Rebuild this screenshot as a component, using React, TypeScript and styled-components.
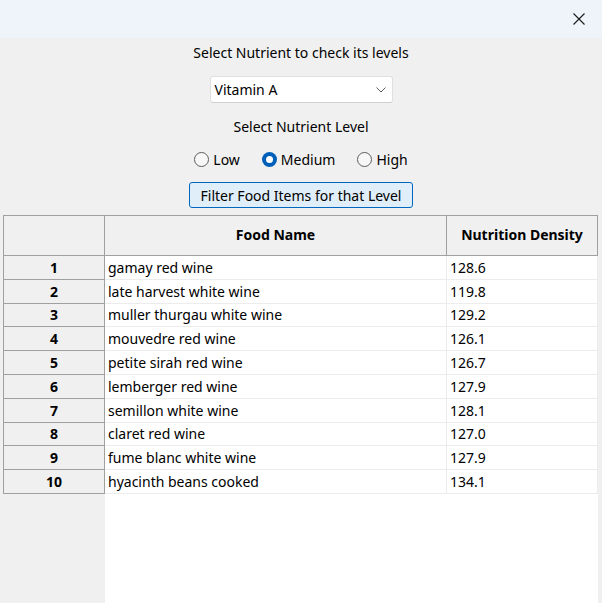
import React from "react";
import styled, { createGlobalStyle } from "styled-components";

const Global = createGlobalStyle`
  html, body { margin: 0; padding: 0; background: #f0f0f0; }
  body { font-family: "Noto Sans", "Open Sans", sans-serif; color: #000; }
`;

const Window = styled.div`
  width: 602px;
  height: 603px;
  display: flex;
  flex-direction: column;
  background: #f0f0f0;
  overflow: hidden;
`;

const TitleBar = styled.div`
  height: 38px;
  flex: none;
  display: flex;
  justify-content: flex-end;
  align-items: center;
  background: #eef4f9;
`;

const CloseButton = styled.div`
  width: 46px;
  height: 38px;
  display: flex;
  align-items: center;
  justify-content: center;
`;

const Controls = styled.div`
  display: flex;
  flex-direction: column;
  align-items: center;
  padding-top: 5px;
  height: 177px;
  box-sizing: border-box;
  flex: none;
`;

const Label = styled.div`
  font-size: 14px;
  line-height: 20px;
  height: 20px;
`;

const Combo = styled.div`
  margin-top: 13px;
  width: 183px;
  height: 27px;
  box-sizing: border-box;
  background: #fff;
  border: 1px solid #e0e0e0;
  border-bottom-color: #cfcfcf;
  border-radius: 3px;
  display: flex;
  align-items: center;
  justify-content: space-between;
  padding: 0 5px 0 4px;
  font-size: 14px;
`;

const LevelLabel = styled(Label)`
  margin-top: 14px;
`;

const RadioRow = styled.div`
  margin-top: 12px;
  display: flex;
  gap: 22px;
  font-size: 14px;
  height: 20px;
  align-items: center;
`;

const Radio = styled.div`
  display: flex;
  align-items: center;
  gap: 4px;
`;

const RadioCircle = styled.span<{ $checked?: boolean }>`
  width: 15px;
  height: 15px;
  box-sizing: border-box;
  border-radius: 50%;
  display: inline-flex;
  align-items: center;
  justify-content: center;
  border: ${(p) => (p.$checked ? "none" : "1px solid #5d5d5d")};
  background: ${(p) => (p.$checked ? "#005fb8" : "#f7f7f7")};
  &::after {
    content: "";
    display: ${(p) => (p.$checked ? "block" : "none")};
    width: 7px;
    height: 7px;
    border-radius: 50%;
    background: #fff;
  }
`;

const FilterButton = styled.div`
  margin-top: 13px;
  width: 224px;
  height: 26px;
  box-sizing: border-box;
  border: 1px solid #0067c0;
  border-radius: 3px;
  background: #e0eef9;
  display: flex;
  align-items: center;
  justify-content: center;
  font-size: 14px;
`;

const TableView = styled.div`
  flex: 1;
  display: flex;
  margin: 0 4px 0 3px;
  border-top: 1px solid #a0a0a0;
  min-height: 0;
`;

const RowHeaderColumn = styled.div`
  width: 102px;
  flex: none;
  display: flex;
  flex-direction: column;
  background: #f0f0f0;
`;

const DataColumn = styled.div`
  flex: 1;
  display: flex;
  flex-direction: column;
  background: #fff;
`;

const HeaderCell = styled.div<{ $w?: string }>`
  height: 40px;
  box-sizing: border-box;
  flex: ${(p) => (p.$w ? "none" : "1")};
  width: ${(p) => p.$w || "auto"};
  background: #f0f0f0;
  border-right: 1px solid #a0a0a0;
  border-bottom: 1px solid #a0a0a0;
  display: flex;
  align-items: center;
  justify-content: center;
  font-weight: bold;
  font-size: 14px;
  padding-bottom: 2px;
`;

const Corner = styled(HeaderCell)`
  flex: none;
  border-left: 1px solid #a0a0a0;
`;

const HeaderRow = styled.div`
  display: flex;
  height: 40px;
  flex: none;
`;

const NumCell = styled.div`
  height: 23.8px;
  flex: none;
  box-sizing: border-box;
  border-left: 1px solid #a0a0a0;
  border-right: 1px solid #a0a0a0;
  border-bottom: 1px solid #a0a0a0;
  display: flex;
  align-items: center;
  justify-content: center;
  font-weight: bold;
  font-size: 14px;
`;

const DataRow = styled.div`
  display: flex;
  flex: none;
  height: 23.8px;
  box-sizing: border-box;
  border-bottom: 1px solid #ececec;
`;

const DataCell = styled.div<{ $w?: string }>`
  flex: ${(p) => (p.$w ? "none" : "1")};
  width: ${(p) => p.$w || "auto"};
  box-sizing: border-box;
  display: flex;
  align-items: center;
  padding-left: 3px;
  font-size: 14px;
  border-right: 1px solid #ececec;
`;

const rows: [string, string][] = [
  ["gamay red wine", "128.6"],
  ["late harvest white wine", "119.8"],
  ["muller thurgau white wine", "129.2"],
  ["mouvedre red wine", "126.1"],
  ["petite sirah red wine", "126.7"],
  ["lemberger red wine", "127.9"],
  ["semillon white wine", "128.1"],
  ["claret red wine", "127.0"],
  ["fume blanc white wine", "127.9"],
  ["hyacinth beans cooked", "134.1"],
];

export default function App() {
  return (
    <Window>
      <Global />
      <TitleBar>
        <CloseButton>
          <svg width="14" height="14" viewBox="0 0 14 14">
            <path d="M1.5 1.5 L12.5 12.5 M12.5 1.5 L1.5 12.5" stroke="#1a1a1a" strokeWidth="1.1" fill="none" />
          </svg>
        </CloseButton>
      </TitleBar>
      <Controls>
        <Label>Select Nutrient to check its levels</Label>
        <Combo>
          <span>Vitamin A</span>
          <svg width="12" height="8" viewBox="0 0 12 8">
            <path d="M1.5 1.5 L6 6 L10.5 1.5" stroke="#606060" strokeWidth="1" fill="none" />
          </svg>
        </Combo>
        <LevelLabel>Select Nutrient Level</LevelLabel>
        <RadioRow>
          <Radio><RadioCircle />Low</Radio>
          <Radio><RadioCircle $checked />Medium</Radio>
          <Radio><RadioCircle />High</Radio>
        </RadioRow>
        <FilterButton>Filter Food Items for that Level</FilterButton>
      </Controls>
      <TableView>
        <RowHeaderColumn>
          <Corner />
          {rows.map((_, i) => (
            <NumCell key={i}>{i + 1}</NumCell>
          ))}
        </RowHeaderColumn>
        <DataColumn>
          <HeaderRow>
            <HeaderCell>Food Name</HeaderCell>
            <HeaderCell $w="151px">Nutrition Density</HeaderCell>
          </HeaderRow>
          {rows.map(([n, v], i) => (
            <DataRow key={i}>
              <DataCell>{n}</DataCell>
              <DataCell $w="151px">{v}</DataCell>
            </DataRow>
          ))}
        </DataColumn>
      </TableView>
    </Window>
  );
}
